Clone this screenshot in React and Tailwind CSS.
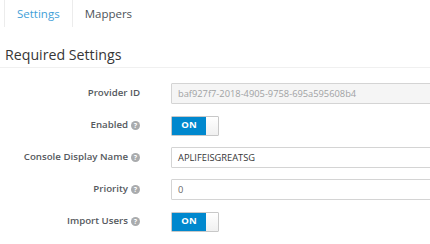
import React from 'react';

function Help() {
    return (
        <span className="ml-[3px] inline-flex h-[9px] w-[9px] items-center justify-center rounded-full bg-[#a9abad] text-[7px] font-bold leading-none text-white">
            ?
        </span>
    );
}

function Toggle() {
    return (
        <div className="flex h-[20px] w-[48px] overflow-hidden rounded-[1px] border border-[#c8c8c8]">
            <div className="flex w-[34px] items-center justify-center bg-[#0088ce] text-[9.5px] font-bold text-white">
                ON
            </div>
            <div className="flex-1 bg-gradient-to-b from-white to-[#f0f0f0]" />
        </div>
    );
}

function Row({ label, help, children }) {
    return (
        <div className="mb-[11px] flex h-[21px] items-center">
            <div className="flex w-[140px] shrink-0 items-center justify-end text-[9.7px] font-semibold text-[#55595e]">
                {label}
                {help && <Help />}
            </div>
            <div className="ml-[31px] flex shrink-0 items-center">{children}</div>
        </div>
    );
}

export default function App() {
    return (
        <div className="h-[244px] w-[430px] overflow-hidden bg-white font-['Open_Sans',sans-serif]">
            {/* Tabs */}
            <div className="flex h-[27px] pl-[4px] text-[11.5px]">
                <div className="flex items-center border-x border-[#ececec] px-[12px] text-[#3f9fd8]">
                    Settings
                </div>
                <div className="flex items-center px-[12px] text-[#4d5258]">Mappers</div>
            </div>

            {/* Heading */}
            <div className="mt-[17px] border-b border-[#f0f0f0] pb-[2px] pl-[5px] text-[14.2px] leading-[21px] text-[#363636]">
                Required Settings
            </div>

            <div className="mt-[15px]">
                <Row label="Provider ID">
                    <div className="flex h-[21px] w-[270px] items-center rounded-[1px] border border-[#d4d4d4] bg-[#f5f5f5] pl-[6px] text-[9.3px] text-[#a0a2a4]">
                        baf927f7-2018-4905-9758-695a595608b4
                    </div>
                </Row>
                <Row label="Enabled" help>
                    <Toggle />
                </Row>
                <Row label="Console Display Name" help>
                    <div className="flex h-[21px] w-[270px] items-center rounded-[1px] border border-[#d4d4d4] bg-white pl-[6px] text-[9.3px] text-[#363636]">
                        APLIFEISGREATSG
                    </div>
                </Row>
                <Row label="Priority" help>
                    <div className="flex h-[21px] w-[270px] items-center rounded-[1px] border border-[#d4d4d4] bg-white pl-[6px] text-[9.3px] text-[#6a6a6a]">
                        0
                    </div>
                </Row>
                <Row label="Import Users" help>
                    <Toggle />
                </Row>
            </div>
        </div>
    );
}
